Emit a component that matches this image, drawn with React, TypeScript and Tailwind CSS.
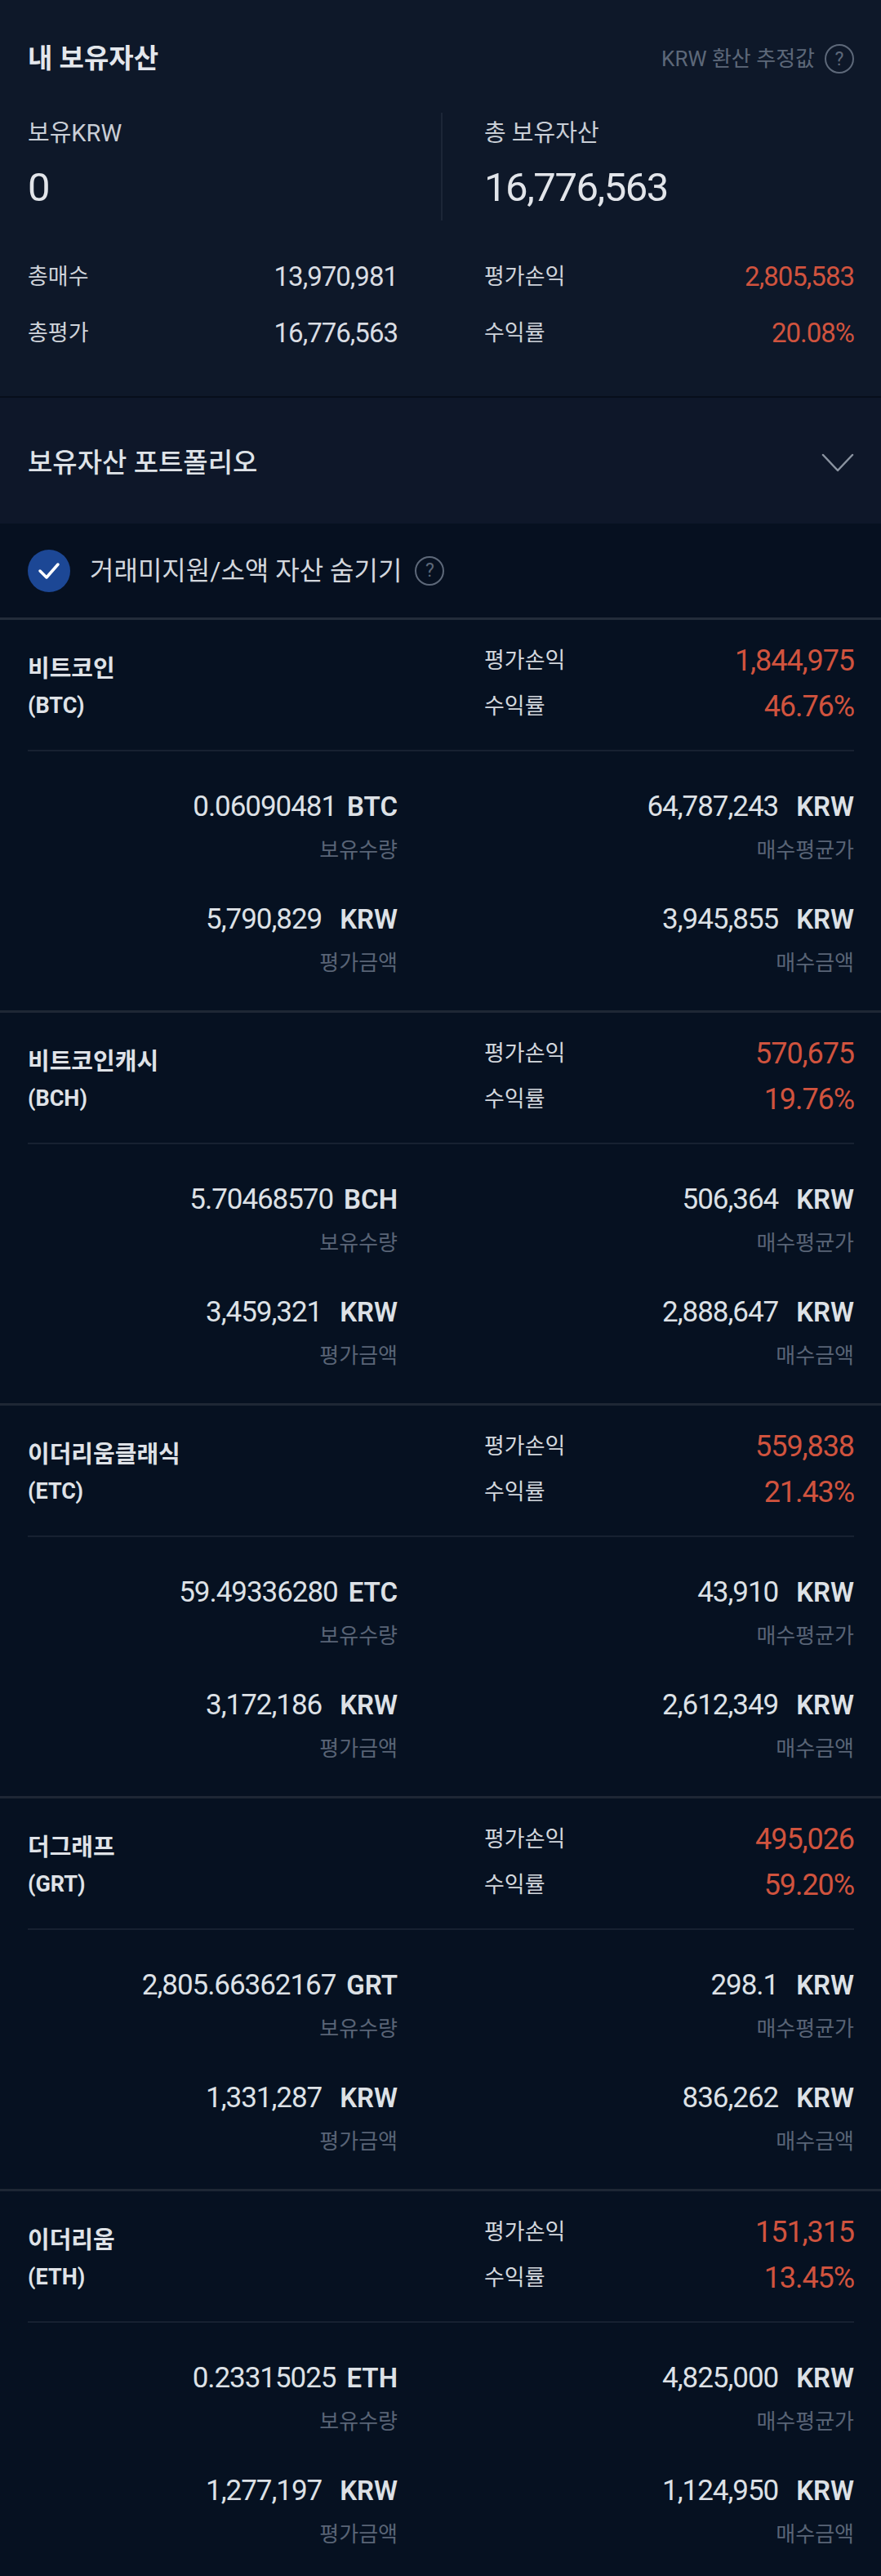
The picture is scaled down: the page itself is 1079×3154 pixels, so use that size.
import { Fragment } from 'react';

type Coin = {
  name: string;
  symbol: string;
  pnl: string;
  rate: string;
  qty: string;
  avg: string;
  evalAmount: string;
  buyAmount: string;
};

const coins: Coin[] = [
  { name: '비트코인', symbol: 'BTC', pnl: '1,844,975', rate: '46.76%', qty: '0.06090481', avg: '64,787,243', evalAmount: '5,790,829', buyAmount: '3,945,855' },
  { name: '비트코인캐시', symbol: 'BCH', pnl: '570,675', rate: '19.76%', qty: '5.70468570', avg: '506,364', evalAmount: '3,459,321', buyAmount: '2,888,647' },
  { name: '이더리움클래식', symbol: 'ETC', pnl: '559,838', rate: '21.43%', qty: '59.49336280', avg: '43,910', evalAmount: '3,172,186', buyAmount: '2,612,349' },
  { name: '더그래프', symbol: 'GRT', pnl: '495,026', rate: '59.20%', qty: '2,805.66362167', avg: '298.1', evalAmount: '1,331,287', buyAmount: '836,262' },
  { name: '이더리움', symbol: 'ETH', pnl: '151,315', rate: '13.45%', qty: '0.23315025', avg: '4,825,000', evalAmount: '1,277,197', buyAmount: '1,124,950' },
];

function HelpBadge() {
  return (
    <span className="flex h-[36px] w-[36px] items-center justify-center rounded-full border-2 border-[#5d6879] text-[23px] leading-none text-[#5d6879]">
      ?
    </span>
  );
}

function DetailCell({ value, unit, label, wide }: { value: string; unit: string; label: string; wide?: boolean }) {
  return (
    <div className="flex flex-col items-end">
      <div className="flex items-baseline leading-[44px]">
        <span className="text-[35px] tracking-[-0.03em] text-[#dde1e6]">{value}</span>
        <span className={`${wide ? 'ml-[22px]' : 'ml-[13px]'} text-[33px] font-semibold text-[#dde1e6]`}>{unit}</span>
      </div>
      <div className="mt-[14px] text-[26px] leading-[34px] text-[#596476]">{label}</div>
    </div>
  );
}

function CoinCard({ coin }: { coin: Coin }) {
  return (
    <div className="border-b-[3px] border-[#1e2735] pl-[34px] pr-[33px]">
      {/* Header */}
      <div className="grid h-[161px] grid-cols-2 gap-x-[106px] border-b-2 border-[#172131]">
        <div className="pt-[38px] font-bold leading-[45px] text-[#dfe2e7]">
          <div className="text-[29px]">{coin.name}</div>
          <div className="text-[27px]">({coin.symbol})</div>
        </div>
        <div className="flex flex-col gap-[16px] pt-[30px]">
          <div className="flex h-[40px] items-center justify-between">
            <span className="text-[27px] text-[#d3d7dd]">평가손익</span>
            <span className="text-[36px] tracking-[-0.03em] text-[#d0533e]">{coin.pnl}</span>
          </div>
          <div className="flex h-[40px] items-center justify-between">
            <span className="text-[27px] text-[#d3d7dd]">수익률</span>
            <span className="text-[36px] tracking-[-0.03em] text-[#d0533e]">{coin.rate}</span>
          </div>
        </div>
      </div>

      {/* Details */}
      <div className="grid grid-cols-2 gap-x-[106px] gap-y-[46px] pb-[41px] pt-[46px]">
        <DetailCell value={coin.qty} unit={coin.symbol} label="보유수량" />
        <DetailCell value={coin.avg} unit="KRW" label="매수평균가" wide />
        <DetailCell value={coin.evalAmount} unit="KRW" label="평가금액" wide />
        <DetailCell value={coin.buyAmount} unit="KRW" label="매수금액" wide />
      </div>
    </div>
  );
}

export default function App() {
  const stats = [
    { label: '총매수', value: '13,970,981', red: false },
    { label: '평가손익', value: '2,805,583', red: true },
    { label: '총평가', value: '16,776,563', red: false },
    { label: '수익률', value: '20.08%', red: true },
  ];

  return (
    <div className="min-h-screen bg-[#061121] font-['Roboto','Noto_Sans_CJK_KR',sans-serif]">
      {/* My assets summary */}
      <div className="border-b-2 border-[#070e1b] bg-[#0e1829] pb-[57px] pl-[34px] pr-[33px] pt-[48px]">
        <div className="flex h-[48px] items-center justify-between">
          <h1 className="text-[33px] font-bold leading-[48px] text-[#e4e7ec]">내 보유자산</h1>
          <div className="flex items-center gap-[12px] text-[26px] text-[#5d6879]">
            <span>KRW 환산 추정값</span>
            <HelpBadge />
          </div>
        </div>

        <div className="mt-[42px] grid h-[132px] grid-cols-2">
          <div className="pt-[7px]">
            <div className="text-[29px] leading-[36px] text-[#c9ced6]">보유KRW</div>
            <div className="mt-[21px] text-[49px] leading-[56px] tracking-[-0.03em] text-[#e2e5ea]">0</div>
          </div>
          <div className="border-l-2 border-[#1c2637] pl-[51px] pt-[7px]">
            <div className="text-[29px] leading-[36px] text-[#c9ced6]">총 보유자산</div>
            <div className="mt-[21px] text-[49px] leading-[56px] tracking-[-0.03em] text-[#e2e5ea]">16,776,563</div>
          </div>
        </div>

        <div className="mt-[49px] grid grid-cols-2 gap-x-[106px] gap-y-[29px]">
          {stats.map((s) => (
            <div key={s.label} className="flex h-[40px] items-center justify-between">
              <span className="text-[27px] text-[#cfd3da]">{s.label}</span>
              <span className={`text-[33px] tracking-[-0.03em] ${s.red ? 'text-[#d0533e]' : 'text-[#dadde3]'}`}>
                {s.value}
              </span>
            </div>
          ))}
        </div>
      </div>

      {/* Portfolio toggle */}
      <div className="flex h-[154px] items-center justify-between bg-[#0e1729] pl-[34px] pr-[33px] pt-[6px]">
        <span className="text-[33px] font-medium text-[#dfe3e8]">보유자산 포트폴리오</span>
        <svg width="40" height="24" viewBox="0 0 40 24" fill="none">
          <polyline points="2,2 20,21 38,2" stroke="#8a93a0" strokeWidth="2.5" strokeLinecap="round" strokeLinejoin="round" />
        </svg>
      </div>

      {/* Hide small assets */}
      <div className="flex h-[115px] items-center bg-[#061020] pl-[34px]">
        <span className="flex h-[52px] w-[52px] items-center justify-center rounded-full bg-[#1c4795]">
          <svg width="28" height="22" viewBox="0 0 28 22" fill="none">
            <polyline points="3,11 11,19 25,3" stroke="#ffffff" strokeWidth="3.5" strokeLinecap="round" strokeLinejoin="round" />
          </svg>
        </span>
        <span className="ml-[24px] text-[32px] text-[#d3d7dd]">거래미지원/소액 자산 숨기기</span>
        <span className="ml-[16px]">
          <HelpBadge />
        </span>
      </div>
      <div className="h-[3px] bg-[#232c3a]" />

      {/* Coin list */}
      {coins.map((coin) => (
        <Fragment key={coin.symbol}>
          <CoinCard coin={coin} />
        </Fragment>
      ))}
    </div>
  );
}
